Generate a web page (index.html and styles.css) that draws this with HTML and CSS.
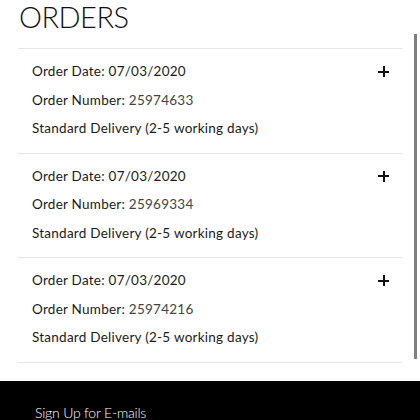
FILE: index.html
```html
<!DOCTYPE html>
<html lang="en">
<head>
    <meta charset="UTF-8">
    <meta name="viewport" content="width=device-width, initial-scale=1.0">
    <title>Orders</title>
    <link rel="stylesheet" href="styles.css">
</head>
<body>

<div class="page">
    <h1 class="title">ORDERS</h1>

    <div class="orders">
        <div class="order">
            <div class="order-info">
                <div class="line">Order Date: 07/03/2020</div>
                <div class="line">Order Number: <span class="num">25974633</span></div>
                <div class="line">Standard Delivery (2-5 working days)</div>
            </div>
            <span class="plus"></span>
        </div>
        <div class="order">
            <div class="order-info">
                <div class="line">Order Date: 07/03/2020</div>
                <div class="line">Order Number: <span class="num">25969334</span></div>
                <div class="line">Standard Delivery (2-5 working days)</div>
            </div>
            <span class="plus"></span>
        </div>
        <div class="order">
            <div class="order-info">
                <div class="line">Order Date: 07/03/2020</div>
                <div class="line">Order Number: <span class="num">25974216</span></div>
                <div class="line">Standard Delivery (2-5 working days)</div>
            </div>
            <span class="plus"></span>
        </div>
    </div>
</div>

<!-- footer -->
<div class="footer">
    <div class="signup">Sign Up for E-mails</div>
</div>

<div class="scrollbar"></div>

</body>
</html>
```

FILE: styles.css
```css
body {
    margin: 0;
    font-family: 'Lato', 'Open Sans', sans-serif;
    color: #1a1a1a;
    background: #fff;
}

.page {
    padding: 0 18px 0 18px;
    height: 381px;
    overflow: hidden;
}

.title {
    margin: 0;
    padding: 2px 0 0 1px;
    font-size: 29px;
    font-weight: 300;
    letter-spacing: -0.5px;
    line-height: 30px;
    height: 48px;
    box-sizing: border-box;
    color: #111;
}

.orders {
    border-top: 1px solid #e6e6e6;
}

.order {
    display: flex;
    justify-content: space-between;
    align-items: flex-start;
    padding: 13px 14px 13px 14px;
    border-bottom: 1px solid #e6e6e6;
    height: 77.5px;
}

.line {
    font-size: 13.5px;
    letter-spacing: 0.25px;
    line-height: 18px;
    margin-bottom: 10.5px;
}

.num {
    color: #444;
}

.plus {
    position: relative;
    width: 11px;
    height: 11px;
    margin-top: 4px;
    margin-right: -1px;
}

.plus::before,
.plus::after {
    content: '';
    position: absolute;
    background: #111;
}

.plus::before {
    left: 0;
    top: 4.5px;
    width: 11px;
    height: 2px;
}

.plus::after {
    left: 4.5px;
    top: 0;
    width: 2px;
    height: 11px;
}

.footer {
    background: #000;
    height: 39px;
    padding: 0 35px;
}

.signup {
    color: #fff;
    font-size: 14px;
    font-weight: 300;
    letter-spacing: -0.2px;
    padding-top: 23px;
    line-height: 18px;
}

.scrollbar {
    position: absolute;
    left: 414px;
    top: 34px;
    width: 3px;
    height: 325px;
    background: #808080;
}
```
